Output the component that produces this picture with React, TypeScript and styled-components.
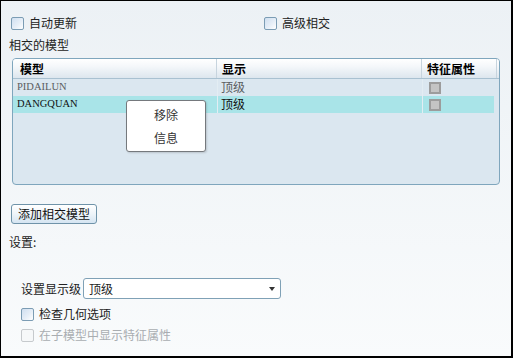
import { FC } from 'react'
import styled, { createGlobalStyle } from 'styled-components'

const GlobalStyle = createGlobalStyle`
  html, body {
    margin: 0;
    padding: 0;
    background: #ffffff;
  }
  * {
    box-sizing: border-box;
  }
`

const FONT = `"Noto Sans CJK SC", "Liberation Sans", sans-serif`

interface Row {
  name: string
  level: string
  selected?: boolean
}

const rows: Row[] = [
  { name: 'PIDAILUN', level: '顶级' },
  { name: 'DANGQUAN', level: '顶级', selected: true }
]

const Frame = styled.div`
  width: 513px;
  height: 358px;
  border-style: solid;
  border-color: #000;
  border-width: 1px 2px 2px 1px;
  background: linear-gradient(180deg, #ecf1f5 0%, #f9fbfc 100%);
  padding: 14px 0 0 8px;
  display: flex;
  flex-direction: column;
  font-family: ${FONT};
  font-size: 12px;
  color: #222;
`

const TopRow = styled.div`
  display: grid;
  grid-template-columns: 254px auto;
  margin-left: 1px;
  height: 16px;
`

const CheckRow = styled.label<{ $disabled?: boolean; $indent?: number }>`
  display: flex;
  align-items: center;
  gap: 5px;
  height: 16px;
  line-height: 16px;
  margin-left: ${(p) => p.$indent ?? 0}px;
  color: ${(p) => (p.$disabled ? '#a9adb1' : '#222')};
`

const Box = styled.span<{ $disabled?: boolean }>`
  width: 13px;
  height: 13px;
  border-radius: 2px;
  border: 1px solid ${(p) => (p.$disabled ? '#c6cacd' : '#7b9cb4')};
  background: ${(p) =>
    p.$disabled ? '#f6f8f9' : 'linear-gradient(135deg, #cfdff0 0%, #e6eef7 55%, #ffffff 100%)'};
  flex: none;
`

const Label = styled.div<{ $top: number }>`
  margin-top: ${(p) => p.$top}px;
  height: 16px;
  line-height: 16px;
`

const GroupBox = styled.div`
  position: relative;
  margin: 5px 0 0 3px;
  width: 488px;
  height: 127px;
  border: 1px solid #7fa6bd;
  border-radius: 4px;
  background: #dbe7f0;
`

const Header = styled.div`
  display: grid;
  grid-template-columns: 204px 205px 75px 1fr;
  height: 20px;
  background: linear-gradient(180deg, #ffffff 0%, #f4f7fa 40%, #dde6ee 100%);
  border-bottom: 1px solid #a9c1d1;
  border-radius: 3px 3px 0 0;
`

const HeadCell = styled.div<{ $pad: number }>`
  padding-left: ${(p) => p.$pad}px;
  line-height: 19px;
  font-weight: bold;
  color: #000;
  border-right: 1px solid #c7d4de;
  &:last-child {
    border-right: none;
  }
`

const BodyRow = styled.div<{ $selected?: boolean }>`
  display: grid;
  grid-template-columns: 204px 205px 72px;
  width: 481px;
  height: 17px;
  background: ${(p) => (p.$selected ? '#a9e4e8' : '#dbe7f0')};
  color: ${(p) => (p.$selected ? '#111' : '#5a5d61')};
`

const NameCell = styled.div`
  padding-left: 4px;
  font-family: 'Liberation Serif', serif;
  font-size: 10.5px;
  line-height: 15px;
`

const LevelCell = styled.div`
  padding-left: 3px;
  line-height: 16px;
  border-left: 1px solid #e3edf3;
`

const FlagCell = styled.div`
  display: flex;
  align-items: center;
  padding-left: 6px;
  border-left: 1px solid #e3edf3;
`

const GrayBox = styled.span`
  width: 12px;
  height: 12px;
  border: 2px solid #9c9c9c;
  background: #c4c4c4;
`

const ContextMenu = styled.div`
  position: absolute;
  left: 113px;
  top: 41px;
  width: 80px;
  height: 52px;
  background: #ffffff;
  border: 1px solid #75797d;
  border-radius: 3px;
  box-shadow: 1px 1px 2px rgba(0, 0, 0, 0.15);
  padding-top: 4px;
  display: flex;
  flex-direction: column;
  align-items: center;
`

const MenuItem = styled.div`
  height: 23px;
  line-height: 20px;
  color: #333;
`

const PushButton = styled.button`
  margin: 19px 0 0 2px;
  width: 86px;
  height: 20px;
  padding: 0;
  font-family: ${FONT};
  font-size: 12px;
  line-height: 18px;
  color: #111;
  border: 1px solid #6f93a9;
  border-radius: 3px;
  background: linear-gradient(180deg, #ffffff 0%, #eef4f9 50%, #d5e5f2 100%);
  align-self: flex-start;
`

const SelectRow = styled.div`
  margin: 28px 0 0 12px;
  display: flex;
  align-items: center;
  gap: 2px;
  height: 21px;
`

const Select = styled.div`
  width: 198px;
  height: 21px;
  border: 1px solid #7fa1b6;
  border-radius: 3px;
  background: #fff;
  display: flex;
  align-items: center;
  justify-content: space-between;
  padding: 0 4px 0 5px;
`

const Arrow = styled.span`
  width: 0;
  height: 0;
  border-left: 3px solid transparent;
  border-right: 3px solid transparent;
  border-top: 4px solid #333;
  margin-right: 1px;
`

const Check: FC<{ label: string; disabled?: boolean; indent?: number; top?: number }> = ({
  label,
  disabled,
  indent,
  top
}) => (
  <CheckRow $disabled={disabled} $indent={indent} style={top ? { marginTop: top } : undefined}>
    <Box $disabled={disabled} />
    {label}
  </CheckRow>
)

const App: FC = () => {
  return (
    <>
      <GlobalStyle />
      <Frame>
        <TopRow>
          <Check label="自动更新" indent={1} />
          <Check label="高级相交" />
        </TopRow>
        <Label $top={6}>相交的模型</Label>
        <GroupBox>
          <Header>
            <HeadCell $pad={7}>模型</HeadCell>
            <HeadCell $pad={5}>显示</HeadCell>
            <HeadCell $pad={5}>特征属性</HeadCell>
            <HeadCell $pad={0} />
          </Header>
          {rows.map((row) => (
            <BodyRow key={row.name} $selected={row.selected}>
              <NameCell>{row.name}</NameCell>
              <LevelCell>{row.level}</LevelCell>
              <FlagCell>
                <GrayBox />
              </FlagCell>
            </BodyRow>
          ))}
          <ContextMenu>
            <MenuItem>移除</MenuItem>
            <MenuItem>信息</MenuItem>
          </ContextMenu>
        </GroupBox>
        <PushButton>添加相交模型</PushButton>
        <Label $top={10}>设置:</Label>
        <SelectRow>
          <span>设置显示级</span>
          <Select>
            <span>顶级</span>
            <Arrow />
          </Select>
        </SelectRow>
        <Check label="检查几何选项" indent={12} top={7} />
        <Check label="在子模型中显示特征属性" indent={12} top={5} disabled />
      </Frame>
    </>
  )
}

export default App
